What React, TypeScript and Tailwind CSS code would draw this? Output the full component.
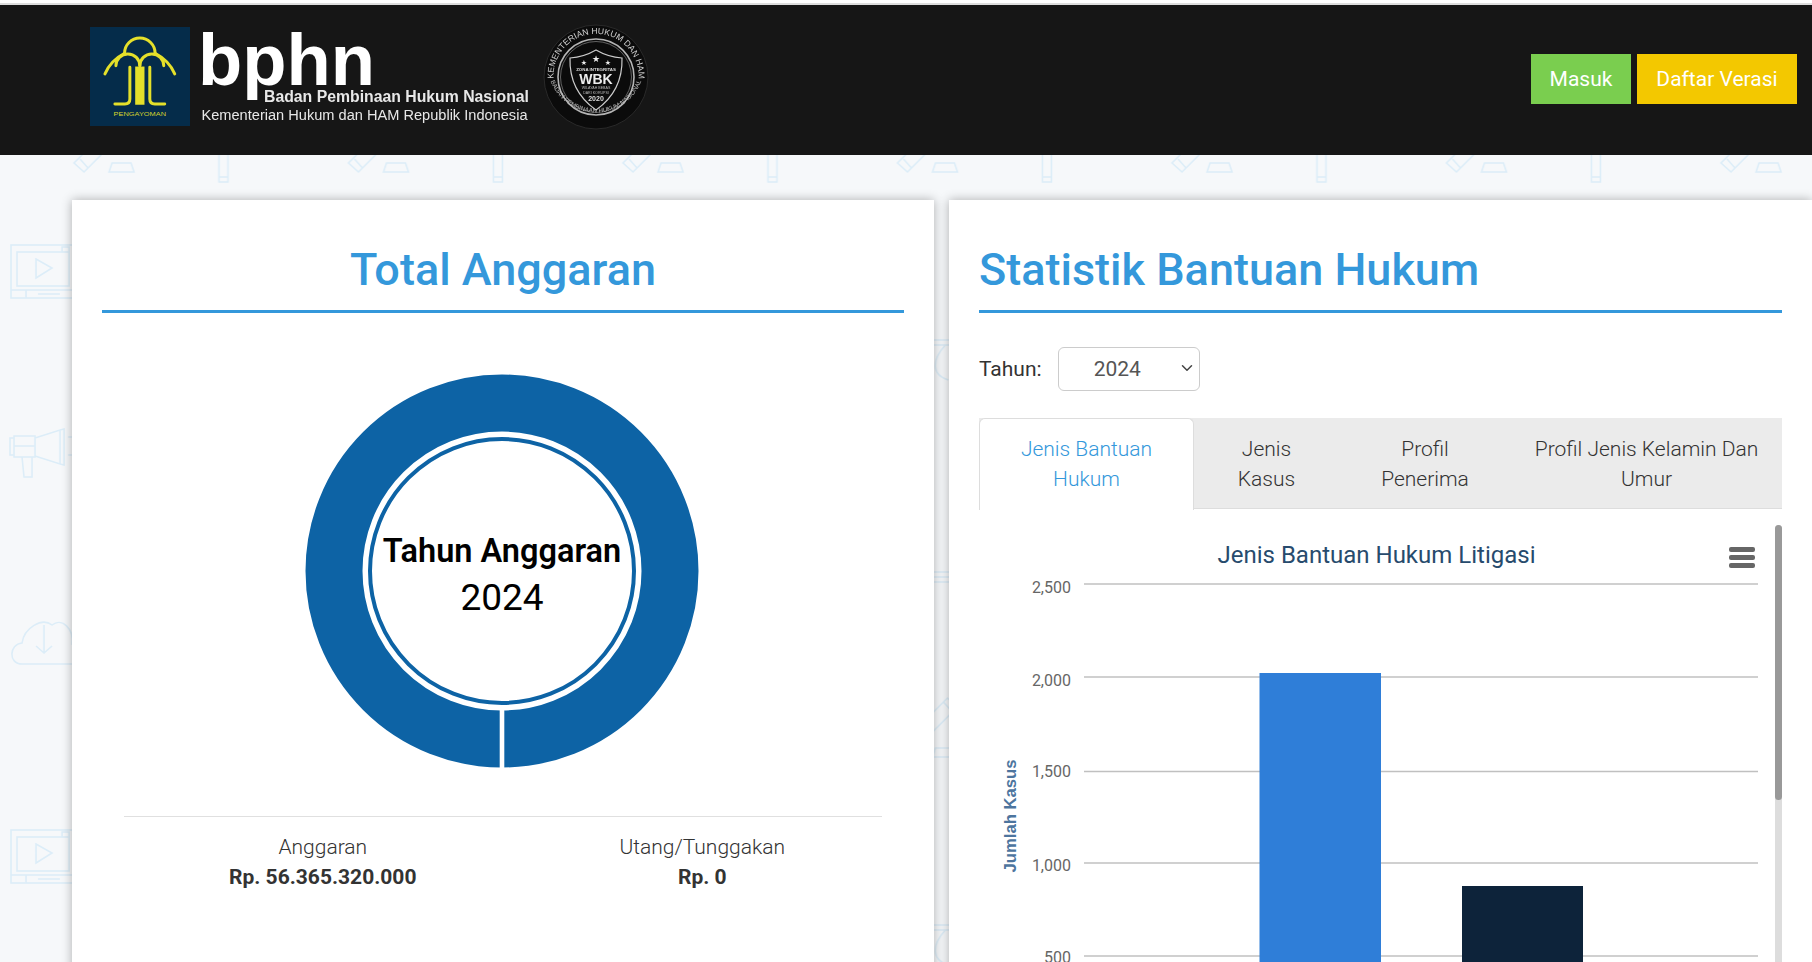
import React from "react";
import { ChevronDown } from "lucide-react";

const roboto = "font-['Roboto',sans-serif]";

function PatternBackground() {
  const pencil = (
    <path d="M84 17 L74 8 L124 -42 L134 -33 Z M80 4 L88 13 M120 -38 L128 -29" />
  );
  return (
    <svg className="absolute inset-0" width="1812" height="962" aria-hidden="true">
      <defs>
        <pattern id="bgicons" patternUnits="userSpaceOnUse" x="0" y="155" width="274.5" height="585">
          <g fill="none" stroke="#dcedf8" strokeWidth="1.6">
            {pencil}
            <g transform="translate(0 585)">{pencil}</g>
            <path d="M109 17 L112 8 H131 L134 17 Z" />
            <path d="M219 -5 H228 V27 H219 Z M219 22 H228" />
            <rect x="11" y="90" width="90" height="53" />
            <rect x="17" y="97" width="52" height="34" />
            <path d="M62 97 V92 H69 V97 M11 135 H101 M26 135 V143 M38 139 H60" />
            <path d="M36 104 L52 113 L36 123 Z" />
            <path d="M10 283 H14 V300 H10 Z M14 281 H35 V302 H14 Z M14 291 H35 M35 283 L60 275 V309 L35 301 M60 275 L64 274 V310 L60 309 M22 302 L24 322 H32 V302 M68 282 H72 M68 300 H72" />
            <path d="M22 509 C8 509 9 489 22 488 C24 473 42 462 52 470 C62 462 74 474 72 489 C84 490 84 509 72 509 Z" />
            <path d="M44 470 V498 M36 491 L44 498 L52 491" />
            <path d="M100 417 H140 M100 422 H140 M100 427 H140" />
            <path d="M100 185 H140 M100 190 H140 M122 190 C108 205 108 220 125 225" />
          </g>
        </pattern>
      </defs>
      <rect x="0" y="155" width="1812" height="807" fill="url(#bgicons)" />
    </svg>
  );
}

function Logo() {
  return (
    <svg width="442" height="100" viewBox="0 0 442 100" className="blur-[0.4px]" role="img" aria-label="bphn">
      <rect x="0" y="0" width="100" height="99" fill="#052c4a" />
      <svg x="0" y="0" width="100" height="99" viewBox="30 52 301 296">
        <g fill="none" stroke="#e5e02a" strokeWidth="9" strokeLinecap="round">
          <path d="M134 130 A46 46 0 0 1 226 130" />
          <path d="M75 192 Q92 152 134 130" />
          <path d="M285 192 Q268 152 226 130" />
          <path d="M108 168 A36 36 0 0 1 180 168" />
          <path d="M180 168 A36 36 0 0 1 252 168" />
          <path d="M150 172 V268 Q150 283 135 283 H105" />
          <path d="M210 172 V268 Q210 283 225 283 H255" />
        </g>
        <rect x="166" y="170" width="28" height="115" fill="#e5e02a" />
        <text x="180" y="318" textAnchor="middle" fontSize="17" fontFamily="Liberation Sans, sans-serif" fill="#d8d42c" textLength="158" lengthAdjust="spacingAndGlyphs">PENGAYOMAN</text>
      </svg>
      <text x="108" y="58" fontFamily="Liberation Sans, sans-serif" fontWeight="700" fontSize="72" fill="#ffffff" textLength="177" lengthAdjust="spacingAndGlyphs">bphn</text>
      <text x="174" y="75" fontFamily="Liberation Sans, sans-serif" fontWeight="700" fontSize="16" fill="#e8e8e8" textLength="265" lengthAdjust="spacingAndGlyphs">Badan Pembinaan Hukum Nasional</text>
      <text x="111.5" y="93" fontFamily="Liberation Sans, sans-serif" fontSize="14" fill="#e8e8e8" textLength="326" lengthAdjust="spacingAndGlyphs">Kementerian Hukum dan HAM Republik Indonesia</text>
    </svg>
  );
}

function Badge() {
  const star = (x: number, y: number, s: number) => (
    <text x={x} y={y} textAnchor="middle" fontSize={s} fill="#eeeeee" fontFamily="DejaVu Sans, sans-serif">★</text>
  );
  return (
    <svg width="106" height="106" viewBox="-53 -53 106 106" className="blur-[0.3px]" role="img" aria-label="WBK 2020">
      <defs>
        <path id="arcTop" d="M-41.6 8 A42.5 42.5 0 1 1 41.6 8" />
        <path id="arcBot" d="M-48 -6 A48.5 48.5 0 0 0 48 -6" />
      </defs>
      <circle r="52" fill="#0b0b0b" stroke="#2a2a2a" strokeWidth="1" />
      <circle r="38" fill="none" stroke="#b5b5b5" strokeWidth="1.6" />
      <circle r="35.5" fill="none" stroke="#777777" strokeWidth="0.8" />
      <text fontSize="8.6" fill="#d2d2d2" fontFamily="Liberation Sans, sans-serif">
        <textPath href="#arcTop" startOffset="50%" textAnchor="middle">KEMENTERIAN HUKUM DAN HAM</textPath>
      </text>
      <text fontSize="6.2" fill="#bdbdbd" fontFamily="Liberation Sans, sans-serif">
        <textPath href="#arcBot" startOffset="50%" textAnchor="middle">BADAN PEMBINAAN HUKUM NASIONAL</textPath>
      </text>
      <path d="M-26 -19 Q-12 -20 0 -27 Q12 -20 26 -19 Q27 14 0 33 Q-27 14 -26 -19 Z" fill="#0b0b0b" stroke="#cccccc" strokeWidth="1.2" />
      {star(-12, -12, 7)}
      {star(0, -15, 9)}
      {star(12, -12, 7)}
      <text y="-6" textAnchor="middle" fontSize="4.4" fill="#dddddd" fontFamily="Liberation Sans, sans-serif" fontWeight="700">ZONA INTEGRITAS</text>
      <text y="7" textAnchor="middle" fontSize="14" fill="#eeeeee" fontFamily="Liberation Sans, sans-serif" fontWeight="700">WBK</text>
      <text y="12" textAnchor="middle" fontSize="3.6" fill="#bbbbbb" fontFamily="Liberation Sans, sans-serif">WILAYAH BEBAS</text>
      <text y="16.5" textAnchor="middle" fontSize="3.6" fill="#bbbbbb" fontFamily="Liberation Sans, sans-serif">DARI KORUPSI</text>
      <text y="24" textAnchor="middle" fontSize="7" fill="#dddddd" fontFamily="Liberation Sans, sans-serif" fontWeight="700">2020</text>
    </svg>
  );
}

function Donut() {
  const blue = "#0d63a5";
  return (
    <svg width="400" height="400" viewBox="-200 -200 400 400" role="img" aria-label="Total Anggaran">
      <circle r="168" fill="none" stroke={blue} strokeWidth="57" />
      <rect x="-2.3" y="136" width="4.6" height="62" fill="#ffffff" />
      <circle r="132" fill="none" stroke={blue} strokeWidth="4" />
      <text y="-9" textAnchor="middle" fontFamily="Roboto, sans-serif" fontWeight="600" fontSize="32.5" fill="#000000">Tahun Anggaran</text>
      <text y="39" textAnchor="middle" fontFamily="Roboto, sans-serif" fontWeight="400" fontSize="37" fill="#000000">2024</text>
    </svg>
  );
}

function Chart() {
  const ticks = [
    { label: "2,500", line: 75, text: 84 },
    { label: "2,000", line: 168, text: 177 },
    { label: "1,500", line: 262.5, text: 268 },
    { label: "1,000", line: 354, text: 362 },
    { label: "500", line: 447, text: 454 },
  ];
  return (
    <svg width="796" height="453" viewBox="0 0 796 453" role="img" aria-label="Jenis Bantuan Hukum Litigasi">
      <text x="397.5" y="54" textAnchor="middle" fontFamily="Roboto, sans-serif" fontSize="24" fill="#274b6d">Jenis Bantuan Hukum Litigasi</text>
      <g fill="#666666">
        <rect x="750" y="38" width="26" height="5" rx="2" />
        <rect x="750" y="46" width="26" height="5" rx="2" />
        <rect x="750" y="54" width="26" height="5" rx="2" />
      </g>
      {ticks.map((t) => (
        <g key={t.label}>
          <line x1="105" x2="779" y1={t.line} y2={t.line} stroke="#c0c0c0" strokeWidth="1.6" />
          <text x="92" y={t.text} textAnchor="end" fontFamily="Roboto, sans-serif" fontSize="16" fill="#666666">{t.label}</text>
        </g>
      ))}
      <rect x="280.5" y="164" width="121.5" height="300" fill="#2f7ed8" />
      <rect x="483" y="377" width="121" height="100" fill="#0d233a" />
      <text transform="translate(37 307) rotate(-90)" textAnchor="middle" fontFamily="Liberation Sans, sans-serif" fontWeight="700" fontSize="16" fill="#4d759e" textLength="113" lengthAdjust="spacingAndGlyphs">Jumlah Kasus</text>
    </svg>
  );
}

export default function App() {
  return (
    <div className={`relative h-[962px] w-full overflow-hidden bg-[#f6f8fa] ${roboto}`}>
      <PatternBackground />
      <div className="relative">
        <div className="h-[3px] bg-white" />
        <div className="h-[2px] bg-[#dddddd]" />
        <header className="flex h-[150px] items-start bg-[#161616] pl-[90px] pr-[15px]">
          <div className="flex items-start pt-[19px]">
            <div className="pt-[3px]">
              <Logo />
            </div>
            <div className="ml-[11px]">
              <Badge />
            </div>
          </div>
          <div className="ml-auto mt-[49px] flex gap-[6px]">
            <button className="h-[50px] w-[100px] bg-[#7ace4f] pt-[2px] text-[21px] text-white">Masuk</button>
            <button className="h-[50px] w-[160px] bg-[#f3c800] pt-[2px] text-[21px] text-white">Daftar Verasi</button>
          </div>
        </header>
        <main className="flex items-start gap-[15px] pl-[72px] pt-[45px]">
          <section className="h-[800px] w-[862px] shrink-0 bg-white px-[30px] shadow-[0_0_10px_rgba(0,0,0,0.3)]">
            <h2 className="border-b-[3px] border-[#3498db] pb-[10px] pt-[40px] text-center text-[45px] font-medium leading-[60px] text-[#3498db]">Total Anggaran</h2>
            <div className="mt-[58px] flex justify-center pr-[3px]">
              <Donut />
            </div>
            <div className="mx-[22px] mt-[45px] border-t-[1.5px] border-[#e0e0e0] pt-[15px]">
              <div className="ml-[9px] mr-[-10px] grid grid-cols-2 text-center text-[21px] leading-[30px] text-[#333333]">
                <div>
                  <p className="font-light">Anggaran</p>
                  <p className="font-bold">Rp. 56.365.320.000</p>
                </div>
                <div>
                  <p className="font-light">Utang/Tunggakan</p>
                  <p className="font-bold">Rp. 0</p>
                </div>
              </div>
            </div>
          </section>
          <section className="h-[800px] w-[863px] shrink-0 bg-white px-[30px] shadow-[0_0_10px_rgba(0,0,0,0.3)]">
            <h2 className="border-b-[3px] border-[#3498db] pb-[10px] pt-[40px] text-[45px] font-medium leading-[60px] text-[#3498db]">Statistik Bantuan Hukum</h2>
            <div className="mt-[34px] flex items-center gap-[16px]">
              <label className="pt-[2px] text-[21px] text-[#333333]">Tahun:</label>
              <div className="relative h-[44px] w-[142px]">
                <select defaultValue="2024" className="h-[44px] w-[142px] appearance-none rounded-[6px] border border-[#cccccc] bg-white pl-[35px] pt-[2px] text-[21px] text-[#555555]">
                  <option>2024</option>
                </select>
                <ChevronDown size={18} strokeWidth={2} className="pointer-events-none absolute right-[4px] top-[12px] text-[#444444]" />
              </div>
            </div>
            <div className="mt-[27px] flex h-[91px] border-b border-[#dddddd] bg-[#ebebeb] text-center text-[21px] font-light leading-[30px] text-[#333333]">
              <div className="-mb-px h-[92px] w-[215px] rounded-t-[6px] border border-b-0 border-[#dddddd] bg-white pt-[15px] text-[#3498db]">Jenis Bantuan<br />Hukum</div>
              <div className="w-[145px] pt-[16px]">Jenis<br />Kasus</div>
              <div className="w-[172px] pt-[16px]">Profil<br />Penerima</div>
              <div className="flex-1 pt-[16px]">Profil Jenis Kelamin Dan<br />Umur</div>
            </div>
            <div className="flex items-start">
              <Chart />
              <div className="mt-[16px] h-[500px] w-[7px] rounded-t-[4px] bg-[#dddddd]">
                <div className="h-[275px] w-full rounded-[4px] bg-[#999999]" />
              </div>
            </div>
          </section>
        </main>
      </div>
    </div>
  );
}
